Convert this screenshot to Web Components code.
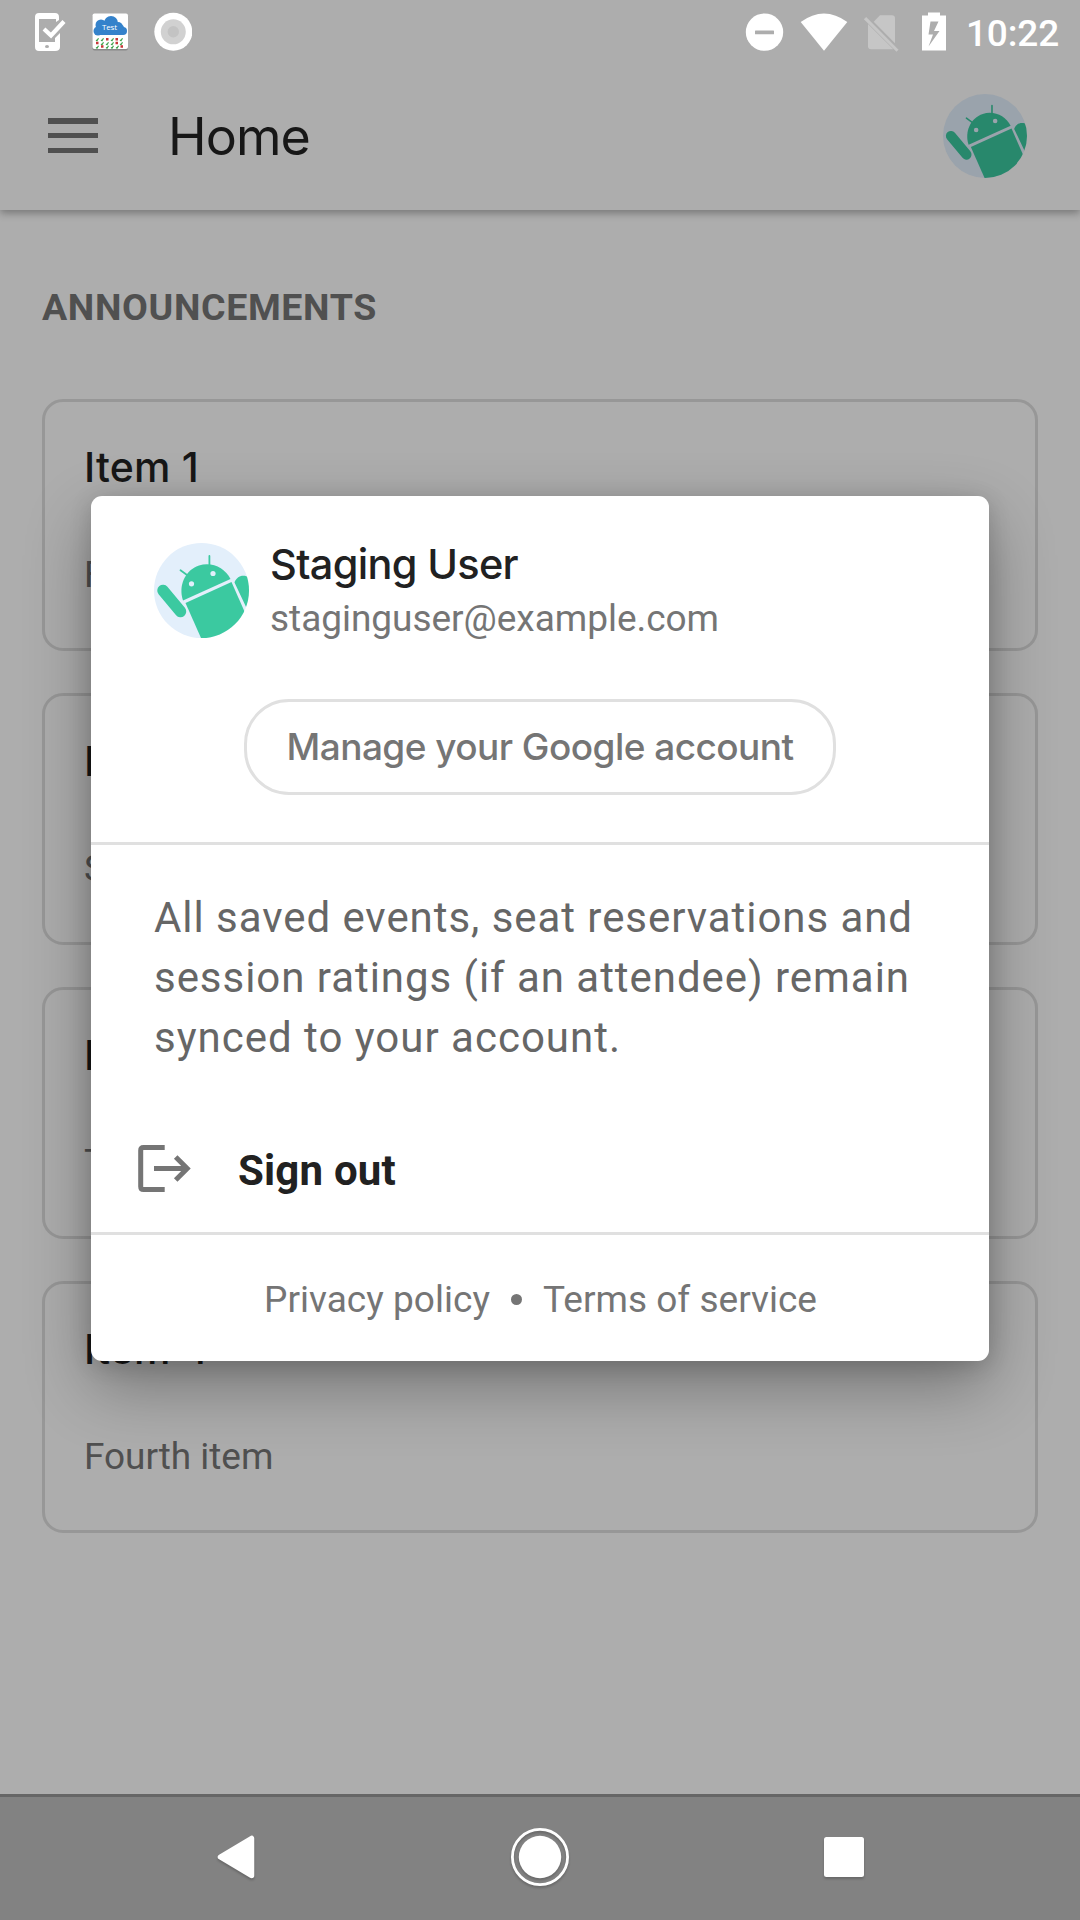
<!DOCTYPE html>
<html lang="en"><head><meta charset="utf-8"><title>Home</title>
<style>html,body{margin:0;height:100%}body{background:#adadad;font-family:Roboto,sans-serif}</style></head>
<body><app-screen></app-screen>
<script>
const define=(name,html,setup)=>customElements.define(name,class extends HTMLElement{
  constructor(){super();this.attachShadow({mode:'open'}).innerHTML=html}
  connectedCallback(){if(setup)setup.call(this,this.shadowRoot)}
});

/* Single line of text, tracked so that it occupies the given advance width. */
define('fit-text',`<style>:host{display:block;white-space:nowrap;flex:none}span{display:inline-block}</style><span><slot></slot></span>`,function(root){
  const s=root.querySelector('span'),w=+this.getAttribute('width'),n=this.textContent.length;
  this.style.width=w+'px';
  s.style.letterSpacing='0px';
  s.style.letterSpacing=((w-s.getBoundingClientRect().width)/n).toFixed(3)+'px';
});

define('user-avatar',`<style>:host{display:block;flex:none}svg{display:block;width:100%;height:100%;border-radius:50%}</style>
<svg viewBox="0 0 95 95"><rect width="95" height="95" fill="var(--bg,#e3effb)"/>
<g fill="var(--fg,#3bc9a0)" stroke="none">
<path d="M29 57.500C24 43 31 27 45 22.500C58 18.500 71 25 76.500 36Z"/>
<path d="M31.500 60L77.500 39L92 72L85 95L47 95Z"/>
<path d="M80.500 39.500L93 66L97 66V36C93 32 87 32 84 34.500C81.500 36.500 81 38 80.500 39.500Z"/></g>
<g stroke="var(--fg,#3bc9a0)" stroke-linecap="round" fill="none"><path d="M9 47.500L26.500 68.500" stroke-width="11.500"/><path d="M55.400 13V24M26.500 27.300L33 32" stroke-width="1.800"/></g>
<circle cx="37.500" cy="40.800" r="2.600" fill="var(--bg,#e3effb)"/><circle cx="59" cy="30.500" r="2.600" fill="var(--bg,#e3effb)"/></svg>`);

define('status-bar',`<style>
:host{display:flex;height:63px;align-items:center;color:#fff;box-sizing:border-box;padding:0 21px 0 33px}
svg{display:block;flex:none}.gap{flex:1}fit-text{font:500 37px/44px Roboto,sans-serif;margin:4px 0 0 19px}
</style>
<svg width="34" height="40" viewBox="33 11 34 40"><path fill="#fff" fill-rule="evenodd" d="M39 12H55Q59 12 59 16V19L56 21V18H39V41H55V37L60 32V46Q60 50 55 50H39Q35 50 35 46V16Q35 12 39 12Z"/><ellipse cx="47" cy="45.500" rx="2" ry="1.600" fill="#adadad"/><path d="M44 28L51 34.500L64 20.500" fill="none" stroke="#fff" stroke-width="4.200"/></svg>
<svg style="margin-left:24px" width="38" height="40" viewBox="91 12 38 40"><rect x="92.500" y="14.500" width="35.500" height="36" rx="2" fill="#888"/><rect x="92.500" y="13.500" width="35.500" height="35.500" rx="2" fill="#fff"/><g fill="#3482cb"><circle cx="111" cy="23" r="7"/><circle cx="101" cy="25" r="5.500"/><circle cx="98" cy="31" r="4.500"/><circle cx="118" cy="27" r="5"/><circle cx="123" cy="31" r="4"/><rect x="97" y="25" width="27" height="10" rx="3"/></g><text x="102" y="30" fill="#fff" font-family="Open Sans,sans-serif" font-size="8" textLength="15">Test</text>
<g stroke="#38a048" stroke-width="1.200" fill="none"><path d="M96 40l1 .7 1.500-2.500M101 40l1 .7 1.500-2.500M111 40l1 .7 1.500-2.500M120 40l1 .7 1.500-2.500M101 44l1 .7 1.500-2.500M106 44l1 .7 1.500-2.500M111 44l1 .7 1.500-2.500M120 44l1 .7 1.500-2.500M96 47.500l1 .7 1.500-2.500M106 47.500l1 .7 1.500-2.500M111 47.500l1 .7 1.500-2.500M116 47.500l1 .7 1.500-2.500"/></g><path fill="#c83737" d="M106 38h2.500v2.500H106zM115.500 38h2.500v2.500h-2.500zM96 41.700h2.500v2.500H96zM115.500 41.700h2.500v2.500h-2.500zM101 45.300h2.500v2.500H101zM120.500 45.300h2.500v2.500h-2.500z"/></svg>
<svg style="margin-left:25px" width="38" height="40" viewBox="154 11.500 38 40"><circle cx="173.300" cy="31.300" r="19" fill="#fff"/><circle cx="173.300" cy="31.300" r="12.500" fill="#d1d1d1"/><circle cx="173.300" cy="31.300" r="5.700" fill="#c3c3c3"/></svg>
<div class="gap"></div>
<svg width="202" height="40" viewBox="745 11.500 202 40"><circle cx="764.500" cy="31.600" r="18.700" fill="#fff"/><rect x="755" y="30" width="19" height="3.800" rx=".6" fill="#adadad"/>
<path d="M800.700 21.500Q824 4.500 847.300 21.500L824 50.300Z" fill="#fff"/>
<g fill="#c6c6c6"><path d="M880 14.700H892Q895 14.700 895 17.700V42.800L873.700 21.300Z"/><path d="M868 23.500L893.300 48.800H871Q868 48.800 868 45.800Z"/><path d="M866.200 16.600L898.500 49.200L896.500 51.300L863.900 18.800Z"/></g>
<path fill="#fff" fill-rule="evenodd" d="M928 12H940V15H946V50H922V15H928ZM930.500 21L928.500 34H933L928.500 46L939.500 30.500H934L938.500 21Z"/></svg>
<fit-text width="93">10:22</fit-text>`);

define('app-bar',`<style>
:host{display:flex;height:147px;align-items:center;box-sizing:border-box;padding:0 53px 2px 48px;box-shadow:0 3px 8px rgba(0,0,0,.32);clip-path:inset(0 0 -30px 0)}
.m{width:50px;height:35px;display:flex;flex-direction:column;justify-content:space-between}.m i{display:block;height:5.500px;background:#505050}
fit-text{font:400 52px/64px Inter,sans-serif;color:#171717;margin:2px 0 0 70px}
user-avatar{width:84px;height:84px;margin-left:auto;--bg:#9aa3ac;--fg:#28886c}</style>
<div class="m"><i></i><i></i><i></i></div><fit-text width="142">Home</fit-text><user-avatar></user-avatar>`);

define('announcement-card',`<style>:host{display:block;box-sizing:border-box;height:252px;border:3px solid #979797;border-radius:21px;padding:40px 0 0 39px}
.t{font:500 41px/50px Inter,sans-serif;color:#171717;letter-spacing:.2px}.d{font:400 37px/44px Roboto,sans-serif;color:#505050;margin-top:61px;letter-spacing:-.05px}</style>
<div class="t"><slot name="title"></slot></div><div class="d"><slot></slot></div>`);

define('pill-button',`<style>:host{display:flex;box-sizing:border-box;width:592px;height:96px;border:3px solid #e0e0e0;border-radius:45px;align-items:center;justify-content:center;font:500 37px/44px Inter,sans-serif;color:#757575}</style><slot></slot>`);

define('account-dialog',`<style>
:host{display:flex;flex-direction:column;box-sizing:border-box;width:898px;height:865px;border-radius:11px;background:#fff;box-shadow:0 26px 66px rgba(0,0,0,.32),0 4px 22px rgba(0,0,0,.16)}
.u{display:flex;padding:47px 0 0 63px;height:156px}.u user-avatar{width:95px;height:95px}.n{margin:-5px 0 0 21px}
.name{font:500 41.500px/52px Inter,sans-serif;color:#212121}.mail{font:400 37px/44px Roboto,sans-serif;color:#757575;margin-top:7px}
pill-button{align-self:center;flex:none}hr{border:0;height:3px;background:#e0e0e0;margin:0;width:100%;flex:none}
.p{padding:43px 0 0 63px;height:251px;font:400 42px/60px Roboto,sans-serif;color:#666}
.s{display:flex;align-items:center;box-sizing:border-box;padding:27px 0 17px 46px;height:136px;flex:none}.s fit-text{font:700 42px/50px Roboto,sans-serif;color:#212121;margin:4px 0 0 45px}
.f{display:flex;justify-content:center;align-items:center;flex:1;padding:3px 0 0 1px;font:400 37px/44px Roboto,sans-serif;color:#757575}.f i{width:11px;height:11px;border-radius:50%;background:#757575;margin:0 21px}
.s svg{display:block}.u,.p{box-sizing:border-box;flex:none}</style>
<div class="u"><user-avatar></user-avatar><div class="n"><fit-text class="name" width="248">Staging User</fit-text><fit-text class="mail" width="449">staginguser@example.com</fit-text></div></div>
<pill-button style="margin-top:47px"><fit-text width="507">Manage your Google account</fit-text></pill-button>
<hr style="margin-top:47px">
<div class="p"><fit-text width="759">All saved events, seat reservations and</fit-text><fit-text width="756">session ratings (if an attendee) remain</fit-text><fit-text width="467">synced to your account.</fit-text></div>
<div class="s"><svg width="56" height="50" viewBox="137 1144 56 50"><g fill="none" stroke="#757575" stroke-width="5"><path d="M164.700 1147.500H143.500Q140.700 1147.500 140.700 1150.500V1186.500Q140.700 1189.500 143.500 1189.500H164.700"/><path d="M154 1168.500H187M175.700 1157L187.200 1168.500L175.700 1180"/></g></svg><fit-text width="158">Sign out</fit-text></div>
<hr><div class="f"><fit-text width="226">Privacy policy</fit-text><i></i><fit-text width="274">Terms of service</fit-text></div>`);

define('nav-bar',`<style>:host{display:flex;box-sizing:border-box;height:126px;border-top:3px solid #666;background:#828282;align-items:center;justify-content:space-between;padding:0 212px 3px 212px}svg{display:block;filter:drop-shadow(0 2px 1px rgba(0,0,0,.2))}</style>
<svg width="50" height="60" viewBox="212 1827 50 60"><path d="M251.500 1838.500V1875.500L220.500 1857Z" fill="#fff" stroke="#fff" stroke-width="5.500" stroke-linejoin="round"/></svg>
<svg width="60" height="60" viewBox="0 0 60 60"><circle cx="30" cy="30" r="27.600" fill="none" stroke="#fff" stroke-width="2.800"/><circle cx="30" cy="30" r="21.200" fill="#fff"/></svg>
<svg width="50" height="60" viewBox="0 0 50 60"><rect x="6" y="10" width="40" height="40" rx="2.500" fill="#fff"/></svg>`);

define('app-screen',`<style>
:host{display:flex;flex-direction:column;width:1080px;height:1920px;background:#adadad;position:relative;overflow:hidden}
main{flex:1;padding:0 42px;display:flex;flex-direction:column;gap:42px}
h2{margin:75px 0 24px;font:700 37.500px/44px Roboto,sans-serif;color:#505050;height:48px}
account-dialog{position:absolute;left:91px;top:496px}</style>
<status-bar></status-bar><app-bar></app-bar>
<main><h2><fit-text width="335">ANNOUNCEMENTS</fit-text></h2>
<announcement-card><span slot="title">Item 1</span>First item</announcement-card>
<announcement-card><span slot="title">Item 2</span>Second item</announcement-card>
<announcement-card><span slot="title">Item 3</span>Third item</announcement-card>
<announcement-card><span slot="title">Item 4</span>Fourth item</announcement-card></main>
<nav-bar></nav-bar><account-dialog></account-dialog>`);
</script></body></html>
